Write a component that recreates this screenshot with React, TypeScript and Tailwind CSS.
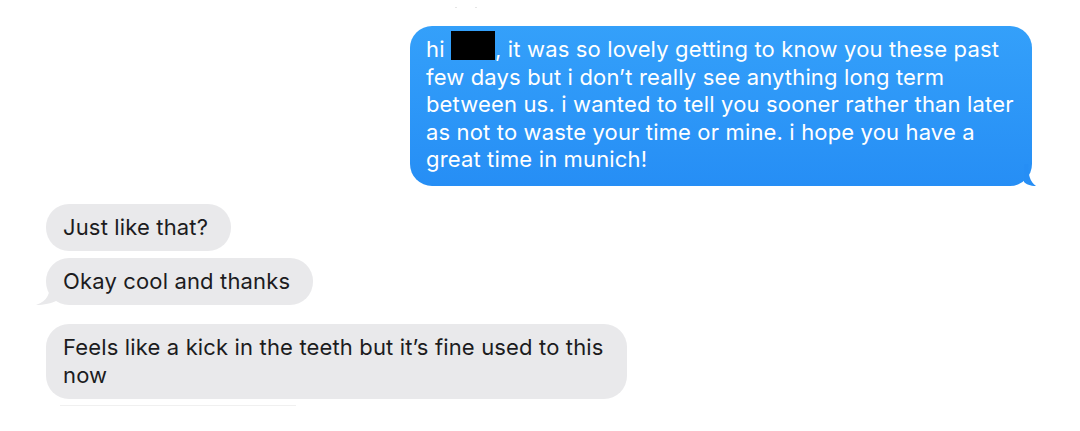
import React from "react";

const font = { fontFamily: "Inter, 'Noto Sans', 'Liberation Sans', sans-serif" };

function SentTail() {
  return (
    <svg
      className="absolute -right-[12px] bottom-0"
      width="20"
      height="22"
      viewBox="0 0 20 22"
      aria-hidden
    >
      <path d="M0 0 H4 C4 10 6 18 12 22 C6 22 2 20 0 18 Z" fill="#268ef5" />
    </svg>
  );
}

function ReceivedTail() {
  return (
    <svg
      className="absolute -left-[10px] bottom-0"
      width="20"
      height="22"
      viewBox="0 0 20 22"
      aria-hidden
    >
      <path d="M20 0 H14 C14 10 12 18 0 22 C8 22 16 20 20 18 Z" fill="#e9e9eb" />
    </svg>
  );
}

function Received({ children, tail }: { children: React.ReactNode; tail?: boolean }) {
  return (
    <div className="relative w-fit rounded-[23px] bg-[#e9e9eb] pl-[17px] pr-[23px] pt-[9px] pb-[10px] text-[22px] leading-[28px] tracking-[0.15px] text-[#1c1c1e]">
      {children}
      {tail && <ReceivedTail />}
    </div>
  );
}

export default function App() {
  return (
    <div className="relative h-[431px] w-[1080px] overflow-hidden bg-white" style={font}>
      {/* faint specks at the top edge */}
      <div className="absolute left-[455px] top-[7px] h-[1px] w-[2px] bg-[#e5e5e5]" />
      <div className="absolute left-[475px] top-[7px] h-[1px] w-[2px] bg-[#e5e5e5]" />

      <div className="flex flex-col pl-[46px] pr-[48px] pt-[26px]">
        <div className="flex justify-end">
          <div className="relative w-[622px] rounded-[22px] bg-gradient-to-b from-[#34a0fa] to-[#268ef5] px-[16px] pt-[10px] pb-[12px] text-[22px] leading-[27.6px] tracking-[0.15px] text-white">
            <div className="whitespace-nowrap">
              hi{" "}
              <span className="relative inline-block h-[16px] w-[44px]">
                <span className="absolute -top-[10px] left-0 h-[29px] w-[44px] bg-black" />
              </span>
              , it was so lovely getting to know you these past
            </div>
            <div className="whitespace-nowrap">few days but i don’t really see anything long term</div>
            <div className="whitespace-nowrap">between us. i wanted to tell you sooner rather than later</div>
            <div className="whitespace-nowrap">as not to waste your time or mine. i hope you have a</div>
            <div className="whitespace-nowrap">great time in munich!</div>
            <SentTail />
          </div>
        </div>

        <div className="mt-[18px] flex flex-col gap-[7px]">
          <Received>Just like that?</Received>
          <Received tail>Okay cool and thanks</Received>
        </div>

        <div className="mt-[19px]">
          <Received>
            <div>Feels like a kick in the teeth but it’s fine used to this</div>
            <div>now</div>
          </Received>
          <div className="ml-[14px] mt-[6px] h-[1px] w-[236px] bg-[#f0f0f0]" />
        </div>
      </div>
    </div>
  );
}
